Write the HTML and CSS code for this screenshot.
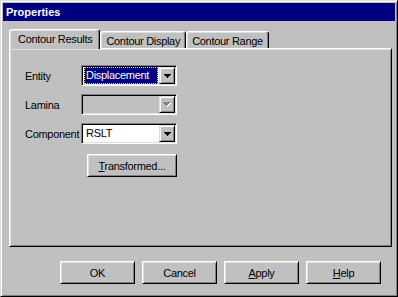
FILE: index.html
```html
<!DOCTYPE html>
<html lang="en">
<head>
  <meta charset="UTF-8">
  <title>Properties</title>
  <link rel="stylesheet" href="styles.css">
</head>
<body>
  <div class="window">
    <div class="titlebar">Properties</div>

    <div class="tabs">
      <div class="tab active">Contour Results</div>
      <div class="tab">Contour Display</div>
      <div class="tab">Contour Range</div>
    </div>

    <div class="panel">
      <div class="field">
        <label>Entity</label>
        <div class="combo">
          <div class="value"><span class="selected">Displacement</span></div>
          <div class="drop">
            <svg width="7" height="4"><path d="M0 0h7v1H0zM1 1h5v1H1zM2 2h3v1H2zM3 3h1v1H3z" fill="#000"/></svg>
          </div>
        </div>
      </div>

      <div class="field">
        <label>Lamina</label>
        <div class="combo disabled">
          <div class="value"></div>
          <div class="drop">
            <svg width="8" height="5">
              <path d="M1 1h7v1H1zM2 2h5v1H2zM3 3h3v1H3zM4 4h1v1H4z" fill="#fff"/>
              <path d="M0 0h7v1H0zM1 1h5v1H1zM2 2h3v1H2zM3 3h1v1H3z" fill="#808080"/>
            </svg>
          </div>
        </div>
      </div>

      <div class="field">
        <label>Component</label>
        <div class="combo">
          <div class="value">RSLT</div>
          <div class="drop">
            <svg width="7" height="4"><path d="M0 0h7v1H0zM1 1h5v1H1zM2 2h3v1H2zM3 3h1v1H3z" fill="#000"/></svg>
          </div>
        </div>
      </div>

      <button class="btn wide"><u>T</u>ransformed...</button>
    </div>

    <div class="buttons">
      <button class="btn">OK</button>
      <button class="btn">Cancel</button>
      <button class="btn"><u>A</u>pply</button>
      <button class="btn"><u>H</u>elp</button>
    </div>
  </div>
</body>
</html>
```

FILE: styles.css
```css
body {
  margin: 0;
  background-color: #c0c0c0;
  font-family: "Liberation Sans", Arial, sans-serif;
  font-size: 11px;
  letter-spacing: -0.3px;
  color: #000;
}

.window {
  width: 398px;
  height: 297px;
  box-sizing: border-box;
  padding: 2px;
  border: 1px solid;
  border-color: #dfdfdf #000 #000 #dfdfdf;
  box-shadow: inset 1px 1px #fff, inset -1px -1px #808080;
  background-color: #c0c0c0;
}

.titlebar {
  height: 18px;
  line-height: 18px;
  padding-left: 3px;
  background-color: #000080;
  color: #fff;
  font-weight: bold;
  font-size: 11px;
  letter-spacing: 0;
}

.tabs {
  display: flex;
  align-items: flex-end;
  height: 19px;
  margin: 8px 0 0 6px;
}

.tab {
  position: relative;
  height: 17px;
  line-height: 18px;
  box-sizing: border-box;
  padding: 0 5px;
  border: 1px solid;
  border-bottom: none;
  border-color: #fff #000 transparent #fff;
  border-radius: 3px 3px 0 0;
  box-shadow: inset -1px 0 #808080, inset 1px 1px #dfdfdf;
  background-color: #c0c0c0;
}

.tab.active {
  z-index: 1;
  height: 20px;
  line-height: 18px;
  margin-bottom: -1px;
  padding: 0 7px 0 8px;
}

.panel {
  height: 199px;
  box-sizing: border-box;
  margin: 0 3px 0 6px;
  padding: 16px 0 0 15px;
  border: 1px solid;
  border-color: #fff #000 #000 #fff;
  box-shadow: inset 1px 1px #dfdfdf, inset -1px -1px #808080;
}

.field {
  display: flex;
  align-items: center;
  height: 21px;
  margin-bottom: 8px;
}

.field label {
  width: 56px;
}

.combo {
  display: flex;
  width: 96px;
  height: 21px;
  box-sizing: border-box;
  padding: 1px;
  border: 1px solid;
  border-color: #808080 #fff #fff #808080;
  box-shadow: inset 1px 1px #000, inset -1px -1px #dfdfdf;
  background-color: #fff;
}

.combo.disabled {
  background-color: #c0c0c0;
}

.combo .value {
  flex: 1;
  display: flex;
  align-items: center;
  padding-left: 3px;
  line-height: 15px;
}

.combo .selected {
  margin-left: -2px;
  margin-right: 1px;
  padding: 0 0 0 1px;
  flex: 1;
  height: 15px;
  border: 1px dotted #ffff00;
  background-color: #000080;
  color: #fff;
}

.drop {
  display: flex;
  align-items: center;
  justify-content: center;
  width: 16px;
  height: 17px;
  box-sizing: border-box;
  border: 1px solid;
  border-color: #dfdfdf #000 #000 #dfdfdf;
  box-shadow: inset 1px 1px #fff, inset -1px -1px #808080;
  background-color: #c0c0c0;
}

.btn {
  width: 75px;
  height: 23px;
  padding: 0;
  border: 1px solid;
  border-color: #fff #000 #000 #fff;
  box-shadow: inset 1px 1px #dfdfdf, inset -1px -1px #808080;
  background-color: #c0c0c0;
  font: inherit;
  letter-spacing: inherit;
  color: #000;
}

.btn.wide {
  width: 90px;
  margin: 2px 0 0 62px;
}

.buttons {
  display: flex;
  justify-content: flex-end;
  gap: 7px;
  margin: 14px 14px 0 0;
}
```
